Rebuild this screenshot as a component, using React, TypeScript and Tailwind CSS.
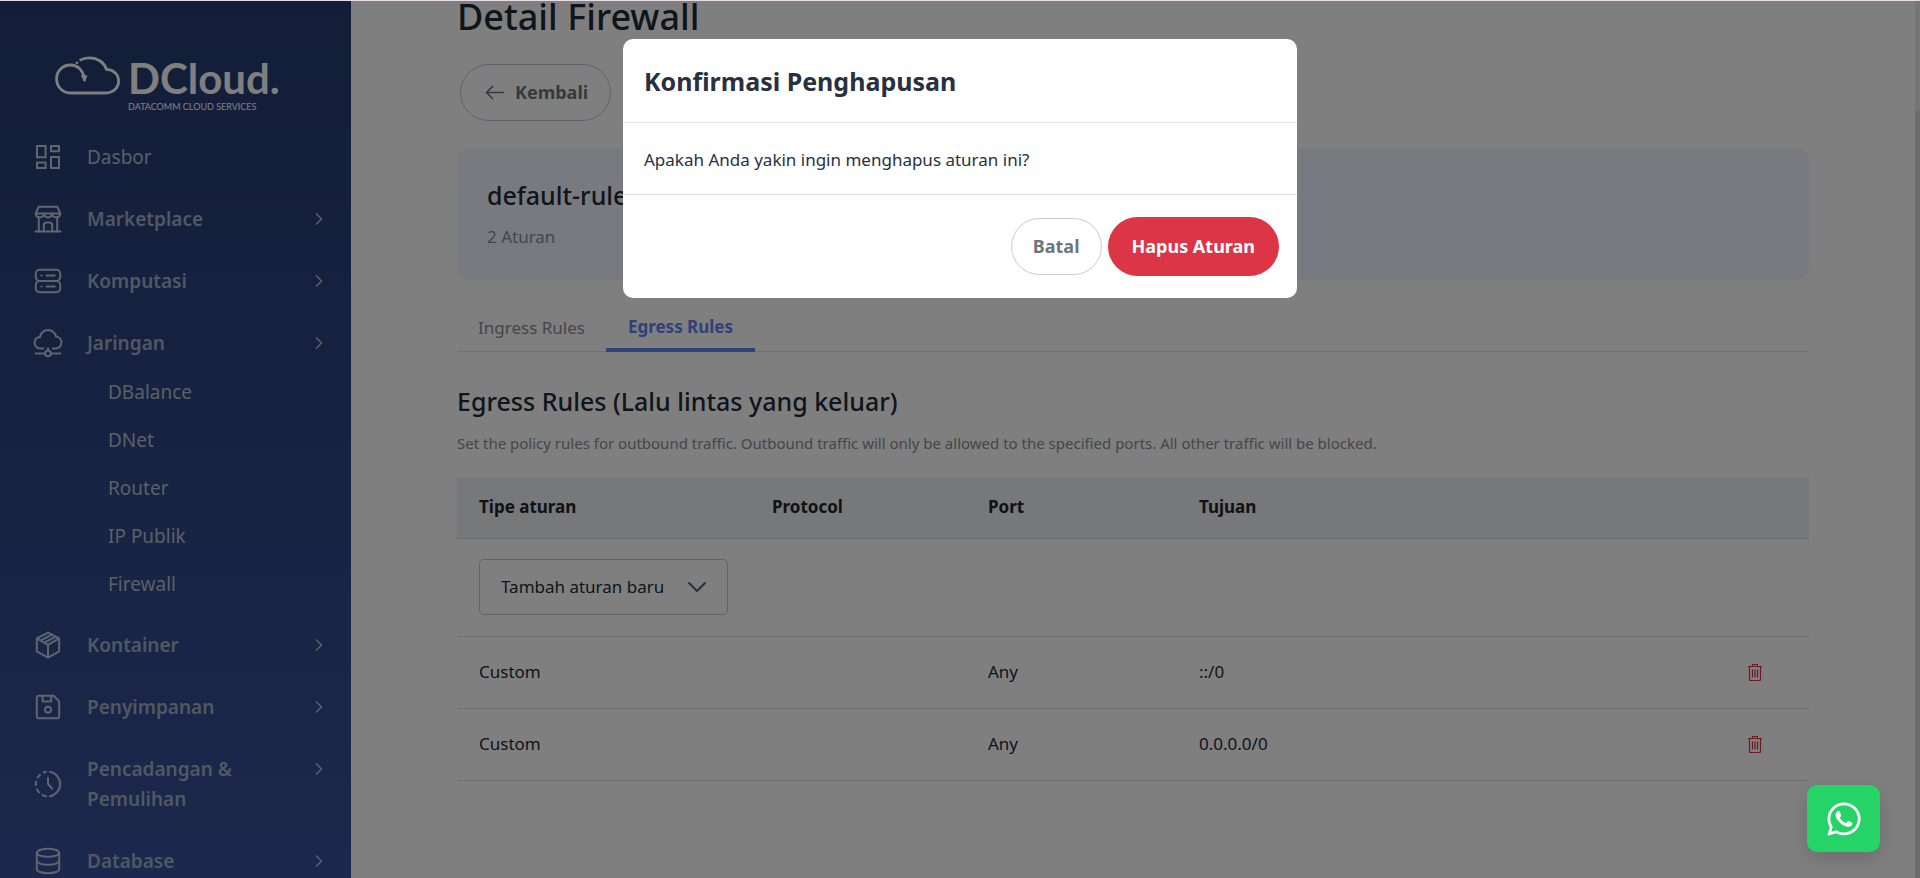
import React, { useState } from 'react';
import { ChevronDown, ChevronRight } from 'lucide-react';
import { FaWhatsapp } from 'react-icons/fa';

interface MenuItem {
  label: string;
  icon: React.ReactNode;
  children?: string[];
  expandable?: boolean;
}

interface Rule {
  id: number;
  type: string;
  protocol: string;
  port: string;
  target: string;
}

function MenuIcon({ children }: { children: React.ReactNode }) {
  return (
    <svg
      viewBox="0 0 30 30"
      className="size-[30px] shrink-0 text-[#c0ccd6]"
      fill="none"
      stroke="currentColor"
      strokeWidth="2"
      strokeLinecap="round"
      strokeLinejoin="round"
      aria-hidden="true"
    >
      {children}
    </svg>
  );
}

const MENU: MenuItem[] = [
  {
    label: 'Dasbor',
    icon: (
      <MenuIcon>
        <g strokeLinejoin="miter">
          <path d="M4 4h8.600v11.200H4zM18 4h8v5.200h-8zM18 15h8v11h-8zM4 20.600h8.600V26H4z" />
        </g>
      </MenuIcon>
    )
  },
  {
    label: 'Marketplace',
    expandable: true,
    icon: (
      <MenuIcon>
        <path d="M5.500 2.800h19l2.700 6.600H2.800z" />
        <path d="M2.800 9.600c0 5 7.400 5 8.200 0 .6 5 7.400 5 8 0 .8 5 8.200 5 8.200 0" />
        <path d="M5.800 14v13.300M24.200 14v13.300M2.600 27.400h24.800" />
        <path d="M10.800 27v-6c0-1.600 1-2.600 2.600-2.600h3.200c1.600 0 2.600 1 2.600 2.600v6" />
      </MenuIcon>
    )
  },
  {
    label: 'Komputasi',
    expandable: true,
    icon: (
      <MenuIcon>
        <rect x="2.800" y="3.800" width="24.400" height="11.200" rx="4" />
        <rect x="2.800" y="15" width="24.400" height="11.200" rx="4" />
        <path d="M8.400 9.400h.2M13.400 9.400h8.400M8.400 20.600h.2M13.400 20.600h8.400" />
      </MenuIcon>
    )
  },
  {
    label: 'Jaringan',
    expandable: true,
    children: ['DBalance', 'DNet', 'Router', 'IP Publik', 'Firewall'],
    icon: (
      <MenuIcon>
        <path d="M10.400 20.600H8C4.200 20.600 1.600 18 1.600 14.800c0-3 2.200-5.400 5.400-5.800C7.600 5.200 10.800 2 15 2s7.400 3 8 6.600c3.200.2 5.400 2.800 5.400 5.800 0 3.400-2.600 6.200-6 6.200h-2.600" />
        <circle cx="15" cy="25.400" r="2.800" />
        <path d="M15 22.400v-2.200M2.800 25.400h9M18.200 25.400h9" />
      </MenuIcon>
    )
  },
  {
    label: 'Kontainer',
    expandable: true,
    icon: (
      <MenuIcon>
        <path d="M15 2.600 26.200 8.400v13L15 27.600 3.800 21.400v-13zM3.800 8.400 15 14.800l11.200-6.400M15 14.800v12.800M7.400 10.600 18.800 4.600M11.200 12.600 22.600 6.600" />
      </MenuIcon>
    )
  },
  {
    label: 'Penyimpanan',
    expandable: true,
    icon: (
      <MenuIcon>
        <path d="M5.800 3.800h14.800L26.200 9.400v14.800c0 1.200-.8 2-2 2H5.800c-1.200 0-2-.8-2-2V5.800c0-1.200.8-2 2-2z" />
        <path d="M9.600 4v5.400h8.600V4" />
        <circle cx="15" cy="17.800" r="3" />
      </MenuIcon>
    )
  },
  {
    label: 'Pencadangan & Pemulihan',
    expandable: true,
    icon: (
      <MenuIcon>
        <path d="M17 2.800a12.400 12.400 0 0 1 0 24.400" />
        <path d="M13 27.200a12.400 12.400 0 0 1 0-24.400" strokeDasharray="3.600 4.400" />
        <path d="M15 9v6l4.200 4.600" />
      </MenuIcon>
    )
  },
  {
    label: 'Database',
    expandable: true,
    icon: (
      <MenuIcon>
        <ellipse cx="15" cy="6.800" rx="11.200" ry="4" />
        <path d="M3.800 6.800v16.400c0 2.200 5 4 11.200 4s11.200-1.800 11.200-4V6.800" />
        <path d="M3.800 14.800c0 2.200 5 4 11.200 4s11.200-1.800 11.200-4" />
      </MenuIcon>
    )
  }
];

const RULES: Rule[] = [
  { id: 1, type: 'Custom', protocol: '', port: 'Any', target: '::/0' },
  { id: 2, type: 'Custom', protocol: '', port: 'Any', target: '0.0.0.0/0' }
];

function Logo() {
  return (
    <a href="#" className="ml-[54px] flex items-start gap-2 text-white">
      <svg viewBox="0 0 66 40" className="mt-1 h-10 w-[66px]" fill="none" stroke="currentColor" aria-hidden="true">
        <path
          d="M30.400 25.600C30 16.500 24.500 10 16.500 10 8.500 10 2.600 16 2.600 23.800c0 8 5.800 14.200 13.900 14.200h35.300c7.200 0 12.800-5.200 12.800-12 0-6.600-5.300-11.600-12.100-11.600C50.200 7.400 43.500 2.800 35.600 2.800c-3.800 0-7 .8-10 2.600"
          strokeWidth="2.800"
        />
        <path d="M26.600 20.600l6.800-.4-2.400 7z" fill="currentColor" stroke="none" />
        <circle cx="22.900" cy="7.800" r="1.400" fill="currentColor" stroke="none" />
      </svg>
      <span className="flex flex-col font-['Lato',sans-serif]">
        <span className="text-[42px] leading-[54px] font-bold">DCloud.</span>
        <span className="-mt-1 text-[9px] leading-3">DATACOMM CLOUD SERVICES</span>
      </span>
    </a>
  );
}

function Sidebar() {
  return (
    <aside className="w-[351px] shrink-0 overflow-hidden bg-linear-to-b from-[#263b70] to-[#38509a] pt-[50px]">
      <Logo />
      <nav className="mt-[13px]">
        <ul>
          {MENU.map(item => (
            <li key={item.label}>
              <button type="button" className="flex w-full items-center py-4 pr-[22px] pl-[33px] text-left">
                {item.icon}
                <span
                  className={
                    item.expandable
                      ? 'ml-6 w-[190px] text-[19px] leading-[30px] font-semibold text-[#a2b0c4]'
                      : 'ml-6 w-[190px] text-[19px] leading-[30px] text-[#b4c0cc]'
                  }
                >
                  {item.label}
                </span>
                {item.expandable && (
                  <span className="ml-auto flex h-[30px] items-center self-start text-[#b4c0cc]">
                    <ChevronRight size={20} strokeWidth={2} />
                  </span>
                )}
              </button>
              {item.children && (
                <ul className="-mt-[6px] pb-[6px]">
                  {item.children.map(child => (
                    <li key={child}>
                      <a href="#" className="block py-[9px] pl-[108px] text-[19px] leading-[30px] text-[#b4c0cc]">
                        {child}
                      </a>
                    </li>
                  ))}
                </ul>
              )}
            </li>
          ))}
        </ul>
      </nav>
    </aside>
  );
}

function BackArrow() {
  return (
    <svg viewBox="0 0 19 15" className="h-[15px] w-[19px]" fill="none" stroke="currentColor" strokeWidth="1.600" aria-hidden="true">
      <path d="M19 7.500H1.500M8 1 1.500 7.500 8 14" />
    </svg>
  );
}

function TrashIcon() {
  return (
    <svg viewBox="0 0 14 17" className="h-[17px] w-[14px]" fill="none" stroke="currentColor" strokeWidth="1.200" aria-hidden="true">
      <path d="M0 2.500h14M4.500 2.500v-2h5v2M1.500 2.500v13c0 .6.400 1 1 1h9c.6 0 1-.4 1-1v-13M4.500 5.500v8M7 5.500v8M9.500 5.500v8" />
    </svg>
  );
}

function RulesTable() {
  return (
    <table className="mt-[19px] w-full table-fixed border-collapse text-left text-[17px] leading-6 text-[#212b36]">
      <thead>
        <tr className="h-[61px] border-b border-[#d6dbe0] bg-[#edf0f4] text-[#212529]">
          <th className="w-[293px] px-[22px] font-bold">Tipe aturan</th>
          <th className="w-[216px] px-[22px] font-bold">Protocol</th>
          <th className="w-[211px] px-[22px] font-bold">Port</th>
          <th className="px-[22px] font-bold">Tujuan</th>
          <th className="w-[108px]" aria-label="Aksi"></th>
        </tr>
      </thead>
      <tbody>
        <tr className="border-b border-[#dee2e6]">
          <td colSpan={5} className="px-[22px] pt-5 pb-[21px]">
            <div className="relative w-[249px]">
              <select
                aria-label="Tambah aturan baru"
                className="block h-14 w-full appearance-none rounded-[5px] border border-[#c8c5d8] bg-transparent px-[21px] text-[17px]"
              >
                <option>Tambah aturan baru</option>
              </select>
              <ChevronDown
                className="pointer-events-none absolute top-3 right-[15px] size-8 text-[#5a6068]"
                strokeWidth={1.5}
              />
            </div>
          </td>
        </tr>
        {RULES.map(rule => (
          <tr key={rule.id} className="h-[72px] border-b border-[#dee2e6]">
            <td className="px-[22px]">{rule.type}</td>
            <td className="px-[22px]">{rule.protocol}</td>
            <td className="px-[22px]">{rule.port}</td>
            <td className="px-[22px]">{rule.target}</td>
            <td>
              <button type="button" aria-label="Hapus" className="mx-auto block text-[#dc3545]">
                <TrashIcon />
              </button>
            </td>
          </tr>
        ))}
      </tbody>
    </table>
  );
}

function ConfirmModal({ onClose }: { onClose: () => void }) {
  return (
    <div className="absolute inset-0 z-10 flex items-start justify-center bg-black/50 pt-[38px]">
      <div role="dialog" aria-labelledby="confirm-title" className="w-[674px] rounded-[10px] bg-white text-[#283041]">
        <h2 id="confirm-title" className="border-b border-[#dee2e6] px-[21px] pt-[25px] pb-6 text-[25px] leading-[34px] font-bold">
          Konfirmasi Penghapusan
        </h2>
        <p className="border-b border-[#dddee8] px-[21px] pt-[23px] pb-[21px] text-[17px] leading-[27px]">
          Apakah Anda yakin ingin menghapus aturan ini?
        </p>
        <div className="flex items-center justify-end gap-[6px] px-[18px] py-[22px] text-[18px] font-bold">
          <button
            type="button"
            onClick={onClose}
            className="h-[57px] rounded-full border border-[#cbc8dc] px-[21px] text-[#6c757d]"
          >
            Batal
          </button>
          <button type="button" onClick={onClose} className="h-[59px] rounded-full bg-[#dc3545] px-6 text-white">
            Hapus Aturan
          </button>
        </div>
      </div>
    </div>
  );
}

export default function App() {
  const [showConfirm, setShowConfirm] = useState(true);

  return (
    <div className="flex h-screen flex-col border-t border-[#ecdcea] bg-white font-['Noto_Sans',sans-serif]">
      <div className="relative flex min-h-0 flex-1 overflow-hidden">
        <Sidebar />

        <main className="min-w-0 flex-1 overflow-hidden px-[106px]">
          <h1 className="text-[36px] leading-[32px] font-medium text-[#212b36]">Detail Firewall</h1>

          <a
            href="#"
            className="mt-[31px] ml-[3px] inline-flex h-[57px] items-center gap-[11px] rounded-full border border-[#c8c5d8] pr-[22px] pl-6 text-[18px] font-bold text-[#6c757d]"
          >
            <BackArrow />
            Kembali
          </a>

          <section className="mt-[27px] h-[132px] rounded-[12px] bg-[#f2f4ff] px-[30px] pt-7">
            <h2 className="text-[25px] leading-[38px] font-medium text-[#212b36]">default-rule</h2>
            <p className="mt-[6px] text-[17px] leading-[34px] text-[#868e96]">2 Aturan</p>
          </section>

          {/* Tabs */}
          <div className="mt-[22px] flex border-b border-[#dee2e6] text-[17px]">
            <button type="button" className="h-[49px] w-[149px] pt-[2px] text-[#868e96]">
              Ingress Rules
            </button>
            <button
              type="button"
              className="-mb-px h-[50px] w-[149px] border-b-4 border-[#5985f0] pt-1 font-bold text-[#5985f0]"
            >
              Egress Rules
            </button>
          </div>

          <h2 className="mt-[30px] text-[25px] leading-[38px] font-medium text-[#212b36]">
            Egress Rules (Lalu lintas yang keluar)
          </h2>
          <p className="mt-2 text-[15px] leading-[30px] text-[#868e96]">
            Set the policy rules for outbound traffic. Outbound traffic will only be allowed to the specified ports. All
            other traffic will be blocked.
          </p>

          <RulesTable />
        </main>

        {/* Page scrollbar */}
        <div className="w-[5px] shrink-0 bg-[#ececec]">
          <div className="mt-[109px] h-full rounded-t-full bg-[#d8d8d8]" />
        </div>

        {showConfirm && <ConfirmModal onClose={() => setShowConfirm(false)} />}
      </div>

      <a
        href="#"
        aria-label="WhatsApp"
        className="fixed right-10 bottom-[26px] z-20 flex h-[67px] w-[73px] items-center justify-center rounded-[10px] bg-[#25d366] text-white shadow-[0_6px_18px_rgba(0,0,0,0.15)]"
      >
        <FaWhatsapp size={38} />
      </a>
    </div>
  );
}
